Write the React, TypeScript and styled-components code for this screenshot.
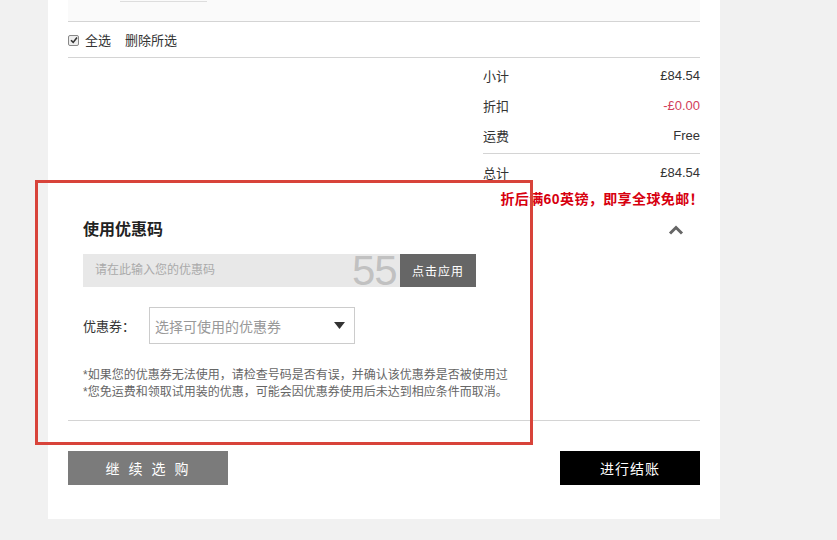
import styled, { createGlobalStyle } from "styled-components";

const GlobalStyle = createGlobalStyle`
  body {
    margin: 0;
    background: #f1f1f1;
    font-family: "Liberation Sans", "Noto Sans CJK SC", sans-serif;
    color: #333;
  }
`;

const Page = styled.div`
  position: relative;
  width: 837px;
  height: 540px;
  padding-left: 48px;
  box-sizing: border-box;
`;

const Panel = styled.div`
  width: 672px;
  background: #fff;
  padding: 0 20px 34px;
  box-sizing: border-box;
`;

const ItemRow = styled.div`
  height: 21px;
  background: #fafafa;
  border-bottom: 1px solid #d4d4d4;
`;

const QtyBox = styled.div`
  margin-left: 52px;
  width: 87px;
  height: 1px;
  border-bottom: 1px solid #ddd;
`;

const SelectRow = styled.div`
  display: flex;
  align-items: center;
  gap: 6px;
  height: 35px;
  border-bottom: 1px solid #d4d4d4;
  font-size: 13px;
`;

const Check = styled.span`
  width: 9px;
  height: 9px;
  border: 1px solid #888;
  border-radius: 2px;
  background: #eee;
  display: flex;
  align-items: center;
  justify-content: center;
  margin-top: 1px;
`;

const Link = styled.span`
  margin-left: 8px;
`;

const Summary = styled.div<{ $line?: boolean }>`
  margin-left: 415px;
  padding: ${(p) => (p.$line ? "2px 0 3px" : "3px 0 0")};
  border-bottom: ${(p) => (p.$line ? "1px solid #d4d4d4" : "none")};
`;

const SumRow = styled.div<{ $red?: boolean }>`
  display: flex;
  justify-content: space-between;
  align-items: center;
  height: 30px;
  font-size: 13px;
  color: #333;

  span:last-child {
    color: ${(p) => (p.$red ? "#d2405a" : "#333")};
  }
`;

const FreeShip = styled.div`
  text-align: right;
  margin-right: -4px;
  padding-top: 2px;
  line-height: 20px;
  font-size: 14px;
  font-weight: bold;
  color: #d7000f;
  letter-spacing: 0.4px;
`;

const Coupon = styled.section`
  padding: 0 16px 0 15px;
`;

const CouponHead = styled.div`
  display: flex;
  justify-content: space-between;
  align-items: center;
  margin-top: 11px;
  line-height: 20px;
`;

const Title = styled.h3`
  margin: 0;
  font-size: 16px;
  font-weight: bold;
  color: #222;
`;

const CodeRow = styled.div`
  position: relative;
  display: flex;
  margin-top: 14px;
  height: 33px;
`;

const CodeInput = styled.div`
  width: 317px;
  background: #e8e8e8;
  color: #aaa;
  font-size: 12px;
  line-height: 33px;
  padding-left: 12px;
  box-sizing: border-box;
`;

const Watermark = styled.span`
  position: absolute;
  left: 269px;
  top: -5px;
  font-family: "Liberation Sans", sans-serif;
  font-size: 42px;
  line-height: 44px;
  color: rgba(160, 160, 160, 0.55);
  letter-spacing: -1px;
  pointer-events: none;
`;

const ApplyButton = styled.button`
  position: relative;
  z-index: 1;
  width: 76px;
  border: none;
  background: #666;
  color: #fff;
  font-family: inherit;
  font-size: 12px;
  letter-spacing: 1px;
  padding: 0;
`;

const VoucherRow = styled.div`
  display: flex;
  align-items: center;
  margin-top: 20px;
  font-size: 13px;
`;

const VoucherLabel = styled.span`
  width: 66px;
`;

const VoucherSelect = styled.div`
  display: flex;
  align-items: center;
  justify-content: space-between;
  width: 206px;
  height: 37px;
  border: 1px solid #ccc;
  box-sizing: border-box;
  padding: 0 9px 0 5px;
  color: #999;
  font-size: 14px;
`;

const Notes = styled.div`
  margin-top: 23px;
  font-size: 12px;
  line-height: 17px;
  color: #666;
`;

const Divider = styled.div`
  margin-top: 19px;
  border-top: 1px solid #d4d4d4;
`;

const Actions = styled.div`
  display: flex;
  justify-content: space-between;
  margin-top: 30px;
`;

const ActionButton = styled.button<{ $dark?: boolean }>`
  height: 34px;
  width: ${(p) => (p.$dark ? "140px" : "160px")};
  border: none;
  background: ${(p) => (p.$dark ? "#000" : "#7b7b7b")};
  color: #fff;
  font-family: inherit;
  font-size: 14px;
  letter-spacing: ${(p) => (p.$dark ? "1px" : "9px")};
  text-indent: ${(p) => (p.$dark ? "0" : "7px")};
  padding: 0;
`;

const Annotation = styled.div`
  position: absolute;
  left: 35px;
  top: 180px;
  width: 498px;
  height: 265px;
  border: 3px solid #d8433a;
  box-sizing: border-box;
  pointer-events: none;
`;

const App = () => {
  return (
    <>
      <GlobalStyle />
      <Page>
        <Panel>
          <ItemRow>
            <QtyBox />
          </ItemRow>
          <SelectRow>
            <Check>
              <svg width="8" height="8" viewBox="0 0 8 8">
                <path d="M1 4.2 L3.2 6.4 L7 1.5" stroke="#333" strokeWidth="1.6" fill="none" />
              </svg>
            </Check>
            <span>全选</span>
            <Link>删除所选</Link>
          </SelectRow>
          <Summary $line>
            <SumRow>
              <span>小计</span>
              <span>£84.54</span>
            </SumRow>
            <SumRow $red>
              <span>折扣</span>
              <span>-£0.00</span>
            </SumRow>
            <SumRow>
              <span>运费</span>
              <span>Free</span>
            </SumRow>
          </Summary>
          <Summary>
            <SumRow>
              <span>总计</span>
              <span>£84.54</span>
            </SumRow>
          </Summary>
          <FreeShip>折后满60英镑，即享全球免邮！</FreeShip>
          <Coupon>
            <CouponHead>
              <Title>使用优惠码</Title>
              <svg width="16" height="10" viewBox="0 0 16 10">
                <polyline points="2,8.5 8,2.5 14,8.5" stroke="#666" strokeWidth="3" fill="none" />
              </svg>
            </CouponHead>
            <CodeRow>
              <CodeInput>请在此输入您的优惠码</CodeInput>
              <Watermark>55</Watermark>
              <ApplyButton>点击应用</ApplyButton>
            </CodeRow>
            <VoucherRow>
              <VoucherLabel>优惠券：</VoucherLabel>
              <VoucherSelect>
                <span>选择可使用的优惠券</span>
                <svg width="11" height="7" viewBox="0 0 11 7">
                  <polygon points="0,0 11,0 5.5,7" fill="#333" />
                </svg>
              </VoucherSelect>
            </VoucherRow>
            <Notes>
              <div>*如果您的优惠券无法使用，请检查号码是否有误，并确认该优惠券是否被使用过</div>
              <div>*您免运费和领取试用装的优惠，可能会因优惠券使用后未达到相应条件而取消。</div>
            </Notes>
          </Coupon>
          <Divider />
          <Actions>
            <ActionButton>继续选购</ActionButton>
            <ActionButton $dark>进行结账</ActionButton>
          </Actions>
        </Panel>
        <Annotation />
      </Page>
    </>
  );
};

export default App;
